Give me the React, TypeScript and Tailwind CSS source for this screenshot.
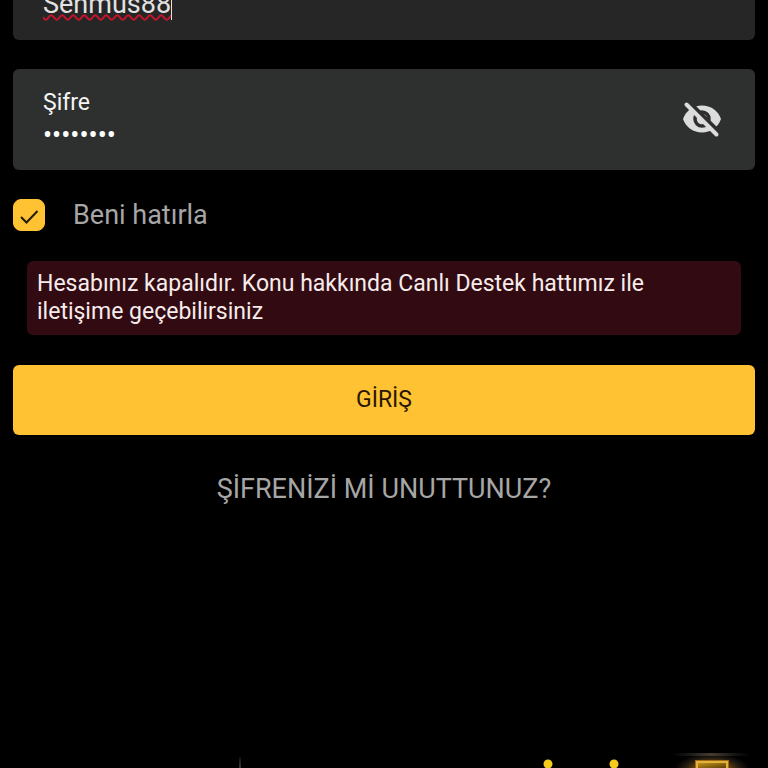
import { useState } from "react";
import { MdVisibility } from "react-icons/md";

const EyeOff = () => {
  return (
    <svg className="h-[42px] w-[42px]" viewBox="0 0 42 42" fill="none" aria-hidden="true">
      <path
        d="M2 21C5 12.500 12.500 7.500 21 7.500S37 12.500 40 21C37 29.500 29.500 34.500 21 34.500S5 29.500 2 21z"
        fill="currentColor"
      />
      <circle cx="21" cy="21" r="7" stroke="#2e302f" strokeWidth="3.5" />
      <path d="M7 3l31 31" stroke="#2e302f" strokeWidth="4" />
      <path
        d="M5.500 6.500L35.500 36.500"
        stroke="currentColor"
        strokeWidth="4"
        strokeLinecap="round"
      />
    </svg>
  );
};

const FooterBanner = () => {
  return (
    <div className="flex h-4 w-full justify-end overflow-hidden" aria-hidden="true">
      <svg className="h-4 w-[568px] shrink-0" viewBox="0 0 568 16">
        <defs>
          <radialGradient id="glow">
            <stop offset="0" stopColor="#9a6a18" />
            <stop offset="0.5" stopColor="#5c3a0c" />
            <stop offset="0.75" stopColor="#1e1810" />
            <stop offset="1" stopColor="#000" />
          </radialGradient>
          <linearGradient id="rim">
            <stop offset="0" stopColor="#333" stopOpacity="0" />
            <stop offset="0.5" stopColor="#453c2e" />
            <stop offset="1" stopColor="#333" stopOpacity="0" />
          </linearGradient>
          <linearGradient id="gold" x1="0" x2="1" y1="0" y2="1">
            <stop offset="0" stopColor="#c39019" />
            <stop offset="1" stopColor="#5c4108" />
          </linearGradient>
          <linearGradient id="pole" x1="0" x2="0" y1="0" y2="1">
            <stop offset="0" stopColor="#111" />
            <stop offset="1" stopColor="#3a3a3a" />
          </linearGradient>
        </defs>
        <rect x="39" y="5" width="2" height="11" fill="url(#pole)" />
        <circle cx="348" cy="12" r="4.5" fill="#f5cb1c" />
        <circle cx="414" cy="12" r="4.5" fill="#f5cb1c" />
        <ellipse cx="512" cy="18" rx="38" ry="17" fill="url(#glow)" />
        <rect x="472" y="1" width="78" height="3" fill="url(#rim)" />
        <path d="M495 16V8h34v8z" fill="#a06a14" />
        <path d="M498 16v-5h28v5z" fill="url(#gold)" />
        <path d="M497 16V10h30v6" fill="none" stroke="#e3b23c" strokeWidth="2" />
      </svg>
    </div>
  );
};

const App = () => {
  const [username, setUsername] = useState("Sehmus88");
  const [password, setPassword] = useState("12345678");
  const [visible, setVisible] = useState(false);
  const [remember, setRemember] = useState(true);

  return (
    <div className="flex min-h-screen flex-col overflow-hidden bg-black font-['Roboto',sans-serif]">
      <form
        className="-mt-[61px] flex flex-col px-[13px]"
        onSubmit={(e) => e.preventDefault()}
      >
        <div className="flex h-[101px] items-end rounded-md bg-[#262626] px-[30px] pb-4">
          <input
            type="text"
            aria-label="Kullanıcı adı"
            className="field-sizing-content h-10 bg-transparent text-[27px] leading-10 text-[#e2e2e2] underline decoration-[#c8142a] decoration-wavy decoration-2 outline-none"
            value={username}
            onChange={(e) => setUsername(e.target.value)}
          />
          <span className="mb-1 h-8 w-px bg-[#e2e2e2]" />
        </div>

        <div className="mt-[29px] flex h-[101px] items-center rounded-md bg-[#2e302f] pr-8 pb-[2px] pl-[30px]">
          <div className="flex flex-1 flex-col">
            <label htmlFor="password" className="text-[23px] leading-8 text-[#f5f5f5]">
              Şifre
            </label>
            <input
              id="password"
              type={visible ? "text" : "password"}
              className="h-8 w-full bg-transparent text-[27px] leading-8 text-white outline-none"
              value={password}
              onChange={(e) => setPassword(e.target.value)}
            />
          </div>
          <button
            type="button"
            aria-label="Şifreyi göster"
            className="text-[#dcdcdc]"
            onClick={() => setVisible(!visible)}
          >
            {visible ? <MdVisibility className="h-[42px] w-[42px]" /> : <EyeOff />}
          </button>
        </div>

        <label className="mt-[29px] flex h-8 items-center">
          <span className="grid">
            <input
              type="checkbox"
              className="col-start-1 row-start-1 h-8 w-8 appearance-none rounded-lg border border-[#fec232] checked:bg-[#fec232]"
              checked={remember}
              onChange={(e) => setRemember(e.target.checked)}
            />
            {remember && (
              <svg
                className="pointer-events-none col-start-1 row-start-1 h-8 w-8"
                viewBox="0 0 32 32"
                fill="none"
                stroke="#231a08"
                strokeWidth="2"
              >
                <path d="M8 18l5.500 5.500L24.500 12" />
              </svg>
            )}
          </span>
          <span className="ml-7 text-[27px] leading-8 text-[#a6a6a6]">
            Beni hatırla
          </span>
        </label>

        <div
          role="alert"
          className="mx-[14px] mt-[30px] rounded-md bg-[#310b11] px-[10px] py-[9px] text-[23px] leading-7 text-[#f7ebec]"
        >
          Hesabınız kapalıdır. Konu hakkında Canlı Destek hattımız ile iletişime
          geçebilirsiniz
        </div>

        <button
          type="submit"
          className="mt-[30px] h-[70px] rounded-md bg-[#fec232] text-[23px] text-[#2a1606]"
        >
          GİRİŞ
        </button>

        <a
          href="#"
          className="mt-[38px] self-center text-[27px] leading-8 text-[#a6a6a6]"
        >
          ŞİFRENİZİ Mİ UNUTTUNUZ?
        </a>
      </form>

      <div className="mt-auto">
        <FooterBanner />
      </div>
    </div>
  );
};

export default App;
